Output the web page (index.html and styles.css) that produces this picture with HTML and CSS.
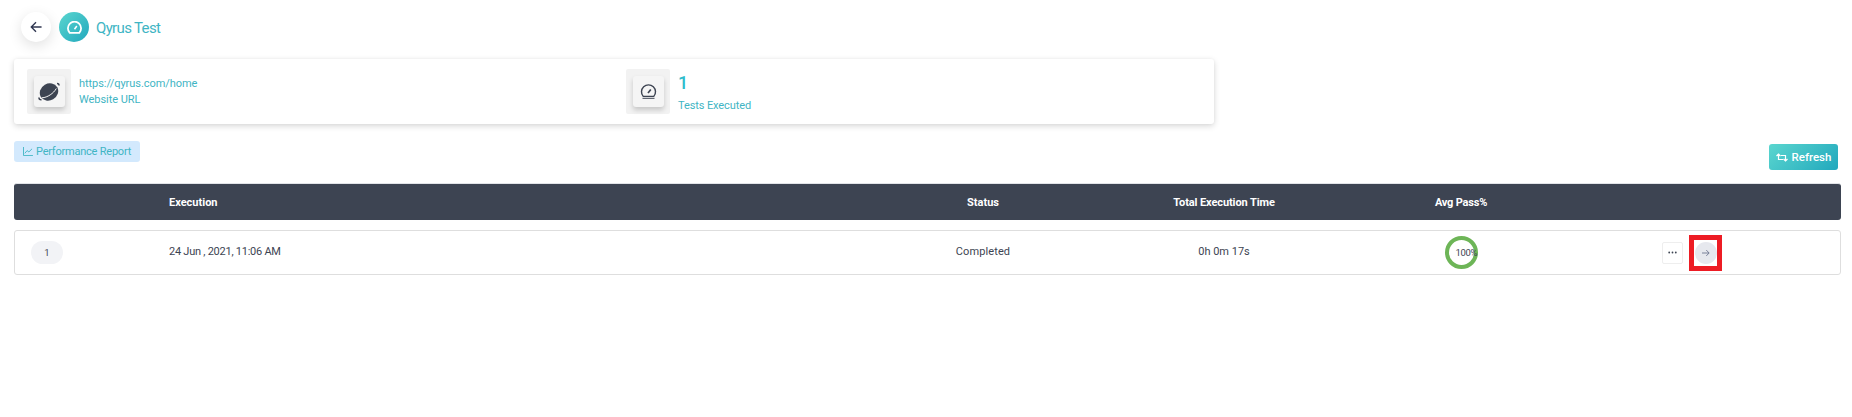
FILE: index.html
```html
<!DOCTYPE html>
<html lang="en">
<head>
<meta charset="utf-8">
<title>Qyrus Test</title>
<link rel="stylesheet" href="styles.css">
</head>
<body>
<header class="top">
  <button class="back" aria-label="Back">
    <svg width="12" height="12" viewBox="0 0 14 14" fill="none" stroke="#2f3650" stroke-width="1.600"><path d="M13.500 7H1.500M7 1.500 1.500 7 7 12.500"/></svg>
  </button>
  <span class="logo">
    <svg width="15" height="13" viewBox="0 0 15 13" fill="none" stroke="#fff" stroke-width="1.800"><path d="M2.700 11.800a6.600 6.600 0 1 1 9.600 0z"/><path d="M7.500 8.300 9.800 5" stroke-width="1.500"/></svg>
  </span>
  <h1 class="title">Qyrus Test</h1>
</header>

<section class="summary">
  <div class="stat stat-url">
    <div class="tile"><div class="tile-inner">
      <svg width="22" height="20" viewBox="0 0 22 20"><ellipse cx="11" cy="10" rx="9.500" ry="8.300" transform="rotate(-30 11 10)" fill="#3d4452"/><path d="M4 15.800C9.500 15.500 15.500 11.500 18.300 6.500" fill="none" stroke="#f5f5f5" stroke-width="1"/><path d="M1.200 15.500c-.4 1.500.3 2.300 2.300 2.200M20.800 3.500c.4-1.300-.3-2-1.800-2" fill="none" stroke="#3d4452" stroke-width="1.600"/></svg>
    </div></div>
    <div class="stat-text">
      <div class="url">https://qyrus.com/home</div>
      <div class="stat-label">Website URL</div>
    </div>
  </div>
  <div class="stat">
    <div class="tile"><div class="tile-inner">
      <svg width="17" height="15" viewBox="0 0 17 15" fill="none" stroke="#3d4452" stroke-width="1.400"><path d="M3.200 12.400a7 7 0 1 1 10.600 0z"/><path d="M8 9 10.800 5.500" stroke-width="1.700"/><path d="M2.500 14.300h12" stroke-width="1"/></svg>
    </div></div>
    <div class="stat-text stat-text-count">
      <div class="count">1</div>
      <div class="stat-label stat-label-low">Tests Executed</div>
    </div>
  </div>
</section>

<div class="toolbar">
  <span class="chip">
    <svg width="10" height="9" viewBox="0 0 11 10" fill="none" stroke="#3fb5c4" stroke-width="1"><path d="M.5 0v9.500H11M2 7l2.500-3 2 1.500L10 2"/></svg>
    Performance Report
  </span>
  <button class="refresh">
    <svg width="12" height="9" viewBox="0 0 12 9" fill="none" stroke="#fff" stroke-width="1.200"><path d="M.5 3 2.500 1l2 2M2.500 1v5.500H7M11.500 6l-2 2-2-2M9.500 8V2.500H5"/></svg>
    Refresh
  </button>
</div>

<div class="grid head">
  <span></span>
  <span>Execution</span>
  <span class="center">Status</span>
  <span class="center total-head">Total Execution Time</span>
  <span class="center avg-head">Avg Pass%</span>
  <span></span>
</div>

<div class="grid row">
  <span class="index"><span class="pill">1</span></span>
  <span class="date cell">24 Jun , 2021, 11:06 AM</span>
  <span class="center status cell">Completed</span>
  <span class="center cell">0h 0m 17s</span>
  <span class="center"><span class="ring"><span class="ring-text">100%</span></span></span>
  <span class="actions">
    <button class="more" aria-label="More">
      <svg width="9" height="3" viewBox="0 0 9 3" fill="#3d4452"><circle cx="1.200" cy="1.500" r=".9"/><circle cx="4.500" cy="1.500" r=".9"/><circle cx="7.800" cy="1.500" r=".9"/></svg>
    </button>
    <span class="highlight">
      <button class="open" aria-label="Open">
        <svg width="8" height="8" viewBox="0 0 9 9" fill="none" stroke="#6c7590" stroke-width="1"><path d="M0 4.500h8M4.800 1.200 8 4.500 4.800 7.800"/></svg>
      </button>
    </span>
  </span>
</div>
</body>
</html>
```
FILE: styles.css
```css
* { box-sizing: border-box; }
html, body { margin: 0; background: #fff; }
body {
  padding: 12px 11px 0 14px;
  font-family: "Roboto", "Liberation Sans", sans-serif;
  font-size: 11px;
  color: #3d4452;
  height: 417px;
  overflow: hidden;
}
button { border: 0; padding: 0; font: inherit; cursor: pointer; }

.top { display: flex; align-items: center; height: 30px; padding-left: 7px; }
.back {
  width: 30px; height: 30px; border-radius: 50%; background: #fff;
  display: flex; align-items: center; justify-content: center;
  box-shadow: 0 4px 14px rgba(0,0,0,.12);
}
.logo {
  width: 30px; height: 30px; border-radius: 50%; margin-left: 8px;
  background: linear-gradient(135deg, #5ad6cf, #22a8bd);
  display: flex; align-items: center; justify-content: center;
}
.title { margin: 0 0 0 7px; padding-top: 2px; font-size: 15px; font-weight: 400; color: #3fb5c4; letter-spacing: -.65px; }

.summary {
  width: 1200px; height: 65px; margin-top: 17px;
  display: flex; align-items: center; padding-left: 13px;
  border-radius: 3px; background: #fff;
  box-shadow: 0 2px 6px rgba(0,0,0,.16), 0 0 3px rgba(0,0,0,.04);
}
.stat { display: flex; align-items: center; gap: 8px; }
.stat-url { width: 599px; }
.tile {
  width: 44px; height: 45px; background: #f2f2f2; border-radius: 2px;
  display: flex; align-items: center; justify-content: center;
}
.tile-inner {
  width: 31px; height: 31px; background: #f5f5f5; border-radius: 3px;
  display: flex; align-items: center; justify-content: center;
  box-shadow: 0 3px 5px rgba(0,0,0,.18);
}
.stat-text { display: flex; flex-direction: column; color: #3fb5c4; }
.stat-text-count { padding-top: 3px; }
.url, .stat-label { font-size: 11px; line-height: 16px; letter-spacing: -.05px; }
.count { font-size: 18px; font-weight: 500; line-height: 22px; color: #2fbccb; }
.stat-label-low { margin-top: 4px; letter-spacing: -.1px; }

.toolbar { display: flex; justify-content: space-between; align-items: flex-start; margin-top: 17px; height: 42px; }
.chip {
  height: 21px; width: 126px; border-radius: 3px; background: #d3e9fd; color: #3fb5c4;
  display: flex; align-items: center; gap: 3px; padding-left: 9px; font-size: 11px; letter-spacing: -.22px;
}
.refresh {
  width: 69px; height: 26px; margin: 3px 3px 0 0; border-radius: 3px; color: #fff; font-weight: 500; font-size: 11.500px;
  background: linear-gradient(135deg, #5ad6cf, #22a8bd);
  display: flex; align-items: center; justify-content: center; gap: 4px;
}

.grid {
  display: grid;
  grid-template-columns: 155px 714px 200px 282px 192px 1fr;
  align-items: center;
}
.center { text-align: center; }
.head {
  height: 37px; background: #3d4452; color: #fff; font-weight: 700; font-size: 11px;
  border-radius: 3px; border-top: 1px solid #e2e4e8;
}
.total-head { letter-spacing: -.1px; }
.avg-head { letter-spacing: -.2px; }
.row {
  height: 45px; margin-top: 10px; border: 1px solid #dedede; border-radius: 3px;
  grid-template-columns: 154px 714px 200px 282px 192px 1fr;
  font-size: 11px; color: #3d4452;
}
.cell { padding-bottom: 3px; }
.date { letter-spacing: -.25px; }
.status { letter-spacing: .1px; }
.index { padding-left: 16px; }
.pill {
  display: flex; align-items: center; justify-content: center;
  width: 32px; height: 23px; border-radius: 12px; background: #f2f3f6; font-size: 9.500px;
}
.ring {
  display: inline-flex; align-items: center; width: 33px; height: 33px; border-radius: 50%;
  border: 4px solid #6db557; vertical-align: middle;
}
.ring-text { font-size: 9.500px; margin-left: 7px; white-space: nowrap; letter-spacing: -.3px; }
.actions { display: flex; align-items: center; gap: 6px; padding-left: 105px; }
.more {
  width: 21px; height: 22px; background: #fff; border: 1px solid #eeeeee; border-radius: 2px;
  display: flex; align-items: center; justify-content: center;
}
.highlight { display: flex; border: 5px solid #ed1c24; width: 33px; height: 36px; align-items: center; justify-content: center; }
.open {
  width: 22px; height: 22px; border-radius: 50%; background: #e6e8ee;
  display: flex; align-items: center; justify-content: center; flex: none;
}
```
